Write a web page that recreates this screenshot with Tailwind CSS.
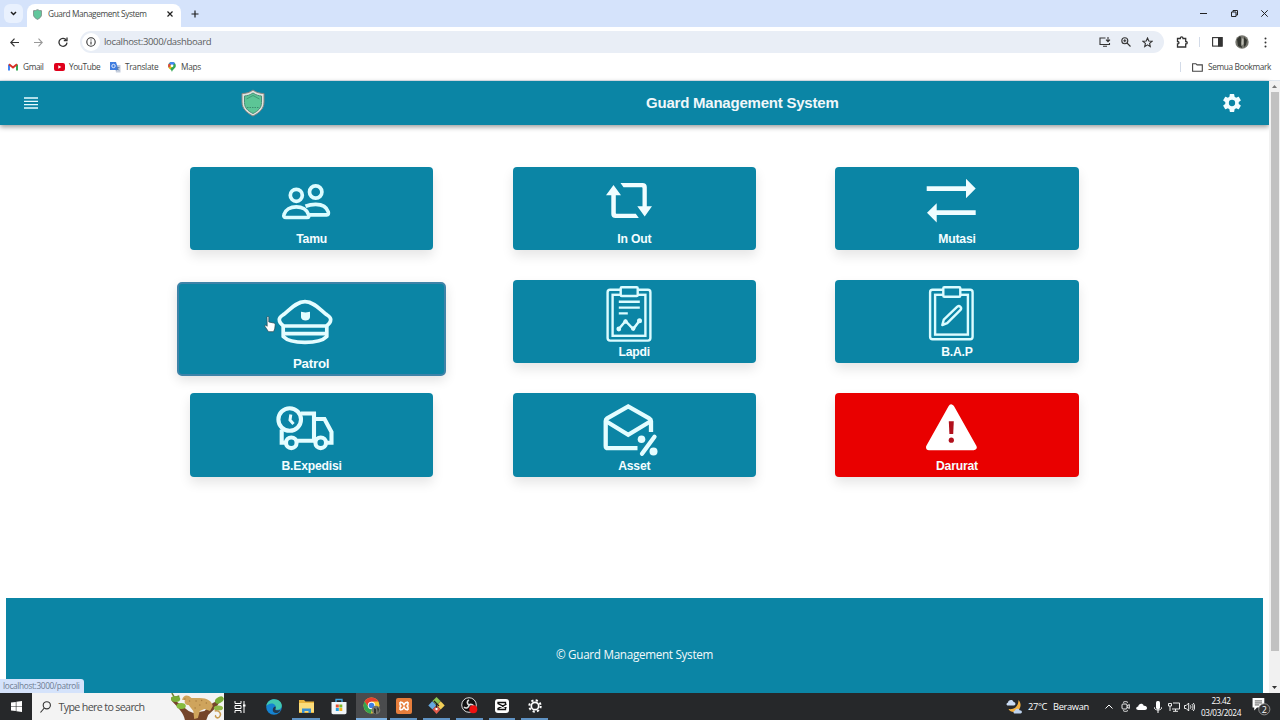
<!DOCTYPE html>
<html lang="id">
  <head>
    <meta charset="UTF-8" />
    <meta name="viewport" content="width=device-width, initial-scale=1.0" />
    <title>Guard Management System</title>
    <script src="https://cdn.jsdelivr.net/npm/@tailwindcss/browser@4"></script>
  </head>

  <body
    class="w-[1280px] h-[720px] overflow-hidden flex flex-col bg-white font-['Open_Sans','Noto_Sans',sans-serif] text-[#444746]"
  >
    <!-- Tab strip -->
    <div class="h-[27px] shrink-0 bg-[#d5e3fb] flex items-center">
      <div class="w-[19px] h-[19px] ml-1 rounded-md bg-[#e9f1fe] flex items-center justify-center">
        <svg class="w-[7px] h-[5px]" viewBox="0 0 7 5" fill="none" stroke="#1f1f1f" stroke-width="1.5"><path d="M1 1l2.500 2.500L6 1" /></svg>
      </div>
      <div class="w-[154px] h-[23px] mt-1 ml-1 rounded-t-lg bg-white flex items-center pl-[6px] pb-[3px]">
        <svg class="w-[9px] h-[11px]" viewBox="0 0 24 28"><path d="M12 1c3 2 7 3 11 3v9c0 7-5 11-11 14C6 24 1 20 1 13V4c4 0 8-1 11-3z" fill="#62c79c" stroke="#7f8f8b" stroke-width="2.500" /></svg>
        <span class="ml-[6px] w-[115px] text-[8.300px] tracking-[-0.400px] whitespace-nowrap">Guard Management System</span>
        <svg class="w-[6px] h-[6px] ml-[4px]" viewBox="0 0 6 6" stroke="#1f1f1f" stroke-width="1.200"><path d="M.5.5l5 5M5.500.5l-5 5" /></svg>
      </div>
      <svg class="w-[8px] h-[8px] ml-[9.500px]" viewBox="0 0 8 8" stroke="#1f1f1f" stroke-width="1.200"><path d="M4 .5v7M.5 4h7" /></svg>
      <div class="ml-auto flex items-center gap-[23.500px] mr-3">
        <svg class="w-[7px] h-[7px]" viewBox="0 0 7 7" stroke="#222"><path d="M0 3.500h7" /></svg>
        <svg class="w-[7px] h-[7px]" viewBox="0 0 7 7" fill="none" stroke="#222"><path d="M.5 2h4.500v4.500H.5zM2 2V.5h4.500V5H5" /></svg>
        <svg class="w-[7px] h-[7px]" viewBox="0 0 7 7" stroke="#222"><path d="M.3.3l6.400 6.400M6.700.3L.3 6.700" /></svg>
      </div>
    </div>

    <!-- Address bar -->
    <div class="h-[30px] shrink-0 flex items-center pl-[10px]">
      <svg class="w-[9px] h-[9px]" viewBox="0 0 9 9" fill="none" stroke="#333" stroke-width="1.200"><path d="M9 4.500H1M4.500.7L.8 4.500l3.700 3.800" /></svg>
      <svg class="w-[9px] h-[9px] ml-[15px]" viewBox="0 0 9 9" fill="none" stroke="#999" stroke-width="1.100"><path d="M0 4.500h8M4.500.7l3.700 3.800-3.700 3.800" /></svg>
      <svg class="w-[10px] h-[10px] ml-[15px]" viewBox="0 0 10 10" fill="none" stroke="#333" stroke-width="1.300"><path d="M8.300 3A4 4 0 1 0 9 5.600" /><path d="M9 .5v3.200H5.800" /></svg>
      <div class="ml-[12px] w-[1084px] h-[22px] rounded-full bg-[#e9eef6] flex items-center pl-[2px] pr-[11px]">
        <div class="w-[18px] h-[18px] rounded-full bg-white flex items-center justify-center">
          <svg class="w-[10px] h-[10px]" viewBox="0 0 10 10" fill="none" stroke="#333" stroke-width="1.100"><circle cx="5" cy="5" r="4.200" /><path d="M5 4.500v3M5 2.500v1.100" /></svg>
        </div>
        <span class="ml-[4px] text-[9.500px] tracking-[-0.340px] text-[#5a5d60]">localhost:3000/dashboard</span>
        <svg class="w-[12px] h-[10px] ml-auto" viewBox="0 0 12 10" fill="none" stroke="#333" stroke-width="1.100"><path d="M6.500 1H1v6.500h9.500V6M4 9.300h4M9 0v4.500M7 2.700l2 2 2-2" /></svg>
        <svg class="w-[10px] h-[10px] ml-[10px]" viewBox="0 0 10 10" fill="none" stroke="#333" stroke-width="1.100"><circle cx="3.800" cy="3.800" r="3" /><path d="M6 6l3.500 3.500M2.300 3.800h3M3.800 2.300v3" /></svg>
        <svg class="w-[11px] h-[11px] ml-[11px]" viewBox="0 0 11 11" fill="none" stroke="#333" stroke-width="1.100"><path d="M5.500 1l1.300 3 3.200.3-2.400 2.100.7 3.200-2.800-1.700-2.800 1.700.7-3.200L1 4.300 4.200 4z" /></svg>
      </div>
      <svg class="w-[12px] h-[12px] ml-[12px]" viewBox="0 0 12 12" fill="none" stroke="#333" stroke-width="1.300"><path d="M1.500 2.500H4.300C4.300.3 7 .3 7 2.500h2.700v3C11.800 5.500 11.800 8 9.700 8v3H1.500V8C3.500 8 3.500 5.500 1.500 5.500z" /></svg>
      <div class="w-px h-[10px] ml-[11px] bg-[#d3dbe8]"></div>
      <svg class="w-[11px] h-[10px] ml-[12px]" viewBox="0 0 11 10"><rect x=".6" y=".6" width="9.500" height="8.500" fill="none" stroke="#333" stroke-width="1.100" /><path d="M6 0h4.500v9.500H6z" fill="#333" /></svg>
      <svg class="w-[14px] h-[14px] ml-[12px]" viewBox="0 0 14 14"><circle cx="7" cy="7" r="6.700" fill="#77776f" /><path d="M2 4l3-3 2 3-1 4 1 5-4-2zM9 2l3 3-1 5-2 2z" fill="#33352f" /><path d="M6.500 3l2 1v5l-2 2z" fill="#bdbdb4" /></svg>
      <svg class="w-[3px] h-[11px] ml-[15px]" viewBox="0 0 3 11" fill="#333"><circle cx="1.500" cy="1.500" r="1" /><circle cx="1.500" cy="5.500" r="1" /><circle cx="1.500" cy="9.500" r="1" /></svg>
    </div>

    <!-- Bookmarks -->
    <div class="h-[24px] shrink-0 flex items-center pl-[8px] pr-[9px] pb-[3px] text-[8.300px] tracking-[-0.400px] border-b border-[#dfe6ee]">
      <svg class="w-[10px] h-[8px]" viewBox="0 0 10 8" fill="none" stroke-width="2"><path d="M1 7.500V1.500" stroke="#4285f4" /><path d="M9 7.500V1.500" stroke="#34a853" /><path d="M1 1.300L5 4.500l4-3.200" stroke="#d93025" /></svg>
      <span class="ml-[5px] w-[31px]">Gmail</span>
      <svg class="w-[11px] h-[8px]" viewBox="0 0 11 8"><rect width="11" height="8" rx="2" fill="#e0001b" /><path d="M4.300 2.300v3.400L7.300 4z" fill="#fff" /></svg>
      <span class="ml-[4px] w-[41px]">YouTube</span>
      <svg class="w-[11px] h-[11px]" viewBox="0 0 11 11"><path d="M4 3h6.500v7.500H6z" fill="#c5cedd" /><path d="M0 0h6l2.500 8H0z" fill="#3f7de0" /><circle cx="3.500" cy="4" r="1.700" fill="none" stroke="#fff" stroke-width=".8" /><path d="M6.500 5.500h3M8 5v1c0 1-1 2-1.500 2.500M7 6.500l2 2" stroke="#5d7fa8" stroke-width=".7" fill="none" /></svg>
      <span class="ml-[4px] w-[43px] tracking-[-0.300px]">Translate</span>
      <svg class="w-[8px] h-[10px]" viewBox="0 0 8 10"><path d="M4 0a3.800 3.800 0 0 0-3.800 3.800C.2 6.500 3.300 7 4 10c.7-3 3.800-3.500 3.800-6.200A3.800 3.800 0 0 0 4 0z" fill="#34a853" /><path d="M4 0a3.800 3.800 0 0 0-3 1.400L4 4l3-2.700A3.800 3.800 0 0 0 4 0z" fill="#4285f4" /><path d="M1 1.400L3 3 .8 6A4 4 0 0 1 1 1.400z" fill="#ea4335" /><path d="M.8 6L3 3.500 4 5 2 7.200z" fill="#fbbc04" /><circle cx="4" cy="3.800" r="1.400" fill="#fff" /></svg>
      <span class="ml-[5px] tracking-[-0.300px]">Maps</span>
      <div class="ml-auto w-px h-[10px] bg-[#d3dbe8]"></div>
      <svg class="w-[11px] h-[9px] ml-[11px]" viewBox="0 0 11 9" fill="none" stroke="#444" stroke-width="1.100"><path d="M.6 8.300V.7h3.300l1.200 1.200h5.200v6.400z" /></svg>
      <span class="ml-[5px]">Semua Bookmark</span>
    </div>

    <!-- Page -->
    <div class="h-[612px] shrink-0 flex relative">
      <div class="w-[1269px] flex flex-col">
        <header class="h-[43.500px] shrink-0 bg-[#0b85a5] shadow-[0_2px_5px_rgba(0,0,0,0.4)] flex items-center pl-[24px] pr-[28px]">
          <svg class="w-[14px] h-[12px]" viewBox="0 0 14 12" stroke="#e8fbff" stroke-width="1.300"><path d="M0 1h14M0 4.300h14M0 7.700h14M0 11h14" /></svg>
          <svg class="w-[24px] h-[28px] ml-[203px]" viewBox="0 0 24 28"><path d="M12 1c3 2.500 7 3.500 11 3.500V13c0 7-5 11-11 14C6 24 1 20 1 13V4.500C5 4.500 9 3.500 12 1z" fill="#dfe3df" stroke="#8a8580" /><path d="M12 4c3 2 5.500 2.800 8.500 3v6.500c0 5.500-3.500 8.500-8.500 11-5-2.500-8.500-5.500-8.500-11V7C6.500 6.800 9 6 12 4z" fill="#5cc596" stroke="#478f78" /><path d="M5.500 10L12 6.500l6.500 3.500" fill="none" stroke="#3f9a77" /><path d="M6 18.500h12" stroke="#3c8f70" stroke-dasharray="1.500 1" /></svg>
          <h1 class="ml-[381px] pt-px font-['Liberation_Sans',sans-serif] font-bold text-[15px] tracking-[-0.220px] text-[#f0f7fa] whitespace-nowrap">Guard Management System</h1>
          <svg class="w-[18px] h-[18px] ml-auto" viewBox="2 2 20 20" fill="#f3fdff"><path d="M19.430 12.980c.04-.32.070-.64.070-.98s-.03-.66-.07-.98l2.110-1.650c.19-.15.240-.42.120-.64l-2-3.460c-.12-.22-.39-.3-.61-.22l-2.490 1c-.52-.4-1.080-.73-1.690-.98l-.38-2.650A.49.490 0 0 0 14 2h-4c-.25 0-.46.180-.49.420l-.38 2.650c-.61.250-1.170.59-1.690.98l-2.490-1c-.23-.09-.49 0-.61.220l-2 3.460c-.13.220-.07.490.120.640l2.110 1.650c-.04.320-.07.650-.07.980s.030.660.070.980l-2.110 1.650c-.19.150-.24.420-.12.640l2 3.460c.12.220.39.300.61.220l2.490-1c.52.400 1.080.730 1.690.98l.38 2.650c.03.240.24.420.49.420h4c.25 0 .46-.18.490-.42l.38-2.650c.61-.25 1.170-.59 1.690-.98l2.490 1c.23.090.49 0 .61-.22l2-3.460c.12-.22.070-.49-.12-.64zM12 15.500a3.500 3.500 0 1 1 0-7 3.500 3.500 0 0 1 0 7z" /></svg>
        </header>

        <main class="mt-[42.100px] ml-[150.300px] w-[968px] h-[431.400px] grid grid-cols-3 auto-rows-[113.350px] justify-items-center items-start font-['Liberation_Sans',sans-serif] font-bold text-[12.200px] tracking-[-0.200px] leading-[14px] text-[#f4fdff]">
          <a class="w-[243.500px] h-[83.500px] pt-[5px] rounded bg-[#0b85a5] shadow-[0_6px_12px_rgba(0,0,0,0.1)] flex flex-col items-center">
            <svg class="w-[60px] h-[60px] mr-[11px]" viewBox="0 0 60 60" fill="none" stroke="#dcfcff" stroke-width="3.700"><circle cx="20.300" cy="23.300" r="6" /><circle cx="39.700" cy="20" r="6.200" /><path d="M10 45.500h21c2 0 2-1.500 1.500-3C31 37.500 26 34.800 20.300 34.800S9.500 37.500 8 42.500c-.5 1.500 0 3 2 3z" /><path d="M29.500 34.300c3-1.300 6-2 10.200-2 6 0 11 2.700 12.500 7.500.6 2 0 3-1.500 3H33.500" /></svg>
            <span>Tamu</span>
          </a>
          <a class="w-[243.500px] h-[83.500px] pt-[5px] rounded bg-[#0b85a5] shadow-[0_6px_12px_rgba(0,0,0,0.1)] flex flex-col items-center">
            <svg class="w-[60px] h-[60px] mr-[11px]" viewBox="0 0 60 60" fill="#f0fdff"><path d="M14.500 13l7.500 10.300h-5.200v17.500c0 .6.300 1 1 1h19l3 4.200H16.500c-2.700 0-4.200-1.500-4.200-4V23.300H7z" /><path d="M21.500 11h22c2.700 0 4.300 1.500 4.300 4v19.300H53l-7.300 10.200-7.400-10.200h5.200V16.300c0-.6-.3-1-1-1H24.500z" /></svg>
            <span>In Out</span>
          </a>
          <a class="w-[243.500px] h-[83.500px] pt-[5px] rounded bg-[#0b85a5] shadow-[0_6px_12px_rgba(0,0,0,0.1)] flex flex-col items-center">
            <svg class="w-[60px] h-[60px] mr-[12px]" viewBox="0 0 60 60" fill="#f0fdff"><path d="M5.700 14.300H45V6.700l9.700 9.800-9.700 9.800v-7.400H5.700z" /><path d="M54.700 38.300h-39v-7L6 40.800l9.700 9.700v-7.500h39z" /></svg>
            <span>Mutasi</span>
          </a>

          <!-- hovered card grows past its cell -->
          <a class="w-[269px] h-[94px] mt-[2.300px] pt-[6px] rounded-[5px] border-2 border-[#3f83a8] bg-[#0b85a5] shadow-[0_4px_12px_rgba(0,0,0,0.12)] flex flex-col items-center text-[13.300px] relative">
            <svg class="w-[60px] h-[60px] mr-[12px]" viewBox="0 0 60 60" fill="none" stroke="#e4fdff" stroke-width="3.700" stroke-linejoin="round"><path d="M7.800 36c-2.800-1.800-4.500-4-4.500-6.500 0-3 3-4 5-5.500 5-3.700 11.700-12.300 20.700-12.300S44.700 20.300 49.700 24c2 1.500 5 2.500 5 5.500 0 2.500-1.700 4.700-4.500 6.500z" /><path d="M7.200 36v10.500C11 50.500 20 52.300 29 52.300s18-1.800 21.800-5.800V36M7.500 43.700h43" /><path d="M25 21.700l4.500.8 4.500-.8v5.500c0 2-2.500 3.300-4.500 3.300S25 29.200 25 27.200z" fill="#e4fdff" stroke="none" /></svg>
            <span class="mt-[6.500px] mr-px">Patrol</span>
            <svg class="absolute left-[85px] top-[32px] w-[12px] h-[17px]" viewBox="0 0 12 17"><path d="M3 1.200c0-1 1.800-1 1.800 0V6l5 1c1 .3 1.500 1 1.400 2l-.5 4-1.200 2.700H4.500L1 10.500c-.6-1 .5-1.800 1.300-1l.9.800z" fill="#fff" stroke="#26454f" stroke-width=".7" /></svg>
          </a>
          <a class="w-[243.500px] h-[83.500px] pt-[5px] rounded bg-[#0b85a5] shadow-[0_6px_12px_rgba(0,0,0,0.1)] flex flex-col items-center">
            <svg class="w-[60px] h-[60px] mr-[11px]" viewBox="0 0 60 60" fill="none" stroke="#dcfcff" stroke-width="2.400"><rect x="8.600" y="4.800" width="42.800" height="50.800" rx="2.500" /><rect x="13.600" y="9.800" width="32.800" height="41" /><rect x="21.700" y="2.200" width="17" height="8.800" rx="1" fill="#0b85a5" /><path d="M19.800 16.700h21M19.800 22.600h21M19.800 28.400h9" /><path d="M19.800 44l6.700-8 7.700 8 6.300-8.300" stroke-width="2.500" /><g fill="#dcfcff" stroke="none"><circle cx="19.800" cy="44" r="2.400" /><circle cx="26.500" cy="36.500" r="2.200" /><circle cx="34.200" cy="43.500" r="2.200" /><circle cx="40.500" cy="35.700" r="2.500" /></g></svg>
            <span>Lapdi</span>
          </a>
          <a class="w-[243.500px] h-[83.500px] pt-[5px] rounded bg-[#0b85a5] shadow-[0_6px_12px_rgba(0,0,0,0.1)] flex flex-col items-center">
            <svg class="w-[60px] h-[60px] mr-[12px]" viewBox="0 0 60 60" fill="none" stroke="#dcfcff" stroke-width="2.400"><rect x="9.100" y="4.800" width="42.500" height="49.500" rx="2.500" /><rect x="14.100" y="9.800" width="32.800" height="39.800" /><rect x="22.300" y="2.200" width="17" height="9.500" rx="1" fill="#0b85a5" /><path d="M21.300 40l1.500-5.300 13.500-13c2.200-1.700 5 1 3.200 3.200l-13.300 13.300z" stroke-linejoin="round" /></svg>
            <span>B.A.P</span>
          </a>

          <a class="w-[243.500px] h-[83.500px] pt-[6px] rounded bg-[#0b85a5] shadow-[0_6px_12px_rgba(0,0,0,0.1)] flex flex-col items-center">
            <svg class="w-[60px] h-[60px] mr-[11px]" viewBox="0 0 60 60" fill="none" stroke="#e4fdff" stroke-width="4.100"><circle cx="13.700" cy="20.500" r="11.300" /><path d="M14.800 15.500L14 21l3.500 4" stroke-width="3" /><path d="M25 14.500h13v27M38 20h10.500l7 13v10.700h-5M5.700 30.500v13.200H10M21 41.700h18" /><circle cx="15.300" cy="43.800" r="5.300" /><circle cx="44.700" cy="43.800" r="5.300" /></svg>
            <span>B.Expedisi</span>
          </a>
          <a class="w-[243.500px] h-[83.500px] pt-[6px] rounded bg-[#0b85a5] shadow-[0_6px_12px_rgba(0,0,0,0.1)] flex flex-col items-center">
            <svg class="w-[60px] h-[60px] mr-[12px]" viewBox="0 0 60 60" fill="none" stroke="#e4fdff" stroke-width="4.300"><path d="M39.500 49.200H10c-1.500 0-2.300-.8-2.300-2.300V22c0-1.500.5-2 1.500-2.700L30.200 7.500l21 11.800c1.200.7 1.800 1.200 1.800 2.700v11" /><path d="M8.500 22.500l21.700 13.300 22-13.300" /><path d="M56.500 37.800L44 54.800" stroke-linecap="round" /><g fill="#e4fdff" stroke="none"><circle cx="43.500" cy="40.200" r="3.800" /><circle cx="55.500" cy="52.500" r="4" /></g></svg>
            <span>Asset</span>
          </a>
          <a class="w-[243.500px] h-[83.500px] pt-[6px] rounded bg-[#e90000] shadow-[0_6px_12px_rgba(0,0,0,0.1)] flex flex-col items-center">
            <svg class="w-[60px] h-[60px] mr-[12px]" viewBox="0 0 60 60"><path d="M30.300 8.500L52.700 48.200H8z" fill="#fff" stroke="#fff" stroke-width="6" stroke-linejoin="round" /><path d="M27.800 22.200h5l-.6 12.800h-3.800z" fill="#b1101c" /><circle cx="30.300" cy="41.200" r="2.600" fill="#b1101c" /></svg>
            <span>Darurat</span>
          </a>
        </main>

        <footer class="mx-[6px] flex-1 bg-[#0b85a5] flex justify-center pt-[47px] text-[11.700px] tracking-[-0.300px] leading-[18px] text-[#f2f9fb]">
          © Guard Management System
        </footer>
      </div>

      <!-- Scrollbar -->
      <div class="w-[11px] bg-[#f1f1f1] flex flex-col items-center">
        <svg class="w-[5px] h-[3px] mt-[4px]" viewBox="0 0 5 3" fill="#777"><path d="M0 3L2.500 0 5 3z" /></svg>
        <div class="w-[8px] h-[559px] mt-[4px] bg-[#c1c1c1]"></div>
        <svg class="w-[5px] h-[3px] mt-auto mb-[4px]" viewBox="0 0 5 3" fill="#333"><path d="M0 0h5L2.500 3z" /></svg>
      </div>

      <div class="absolute left-0 bottom-0 w-[84px] h-[14px] bg-[#d5e3fb] rounded-tr-[3px] pl-[3px] text-[8.300px] tracking-[-0.350px] leading-[14px] text-[#6f7d92]">localhost:3000/patroli</div>
    </div>

    <!-- Taskbar -->
    <div class="flex-1 bg-[#26282a] flex items-stretch text-white">
      <div class="w-[32px] flex items-center justify-center">
        <svg class="w-[11px] h-[11px]" viewBox="0 0 11 11" fill="#fff"><path d="M0 1.600l4.800-.7v4.300H0zM5.400.8L11 0v5.200H5.400zM0 5.800h4.800v4.300L0 9.400zM5.400 5.800H11V11l-5.600-.8z" /></svg>
      </div>
      <div class="w-[192px] bg-[#f3f3f3] flex items-center pl-[8px] text-[#4c4c4c] text-[10.700px] relative">
        <svg class="w-[11px] h-[12px]" viewBox="0 0 11 12" fill="none" stroke="#333" stroke-width="1.100"><circle cx="6.800" cy="4.300" r="3.600" /><path d="M4.300 7L.5 11.500" /></svg>
        <span class="ml-[7.500px] mt-px tracking-[-0.650px]">Type here to search</span>
        <svg class="absolute right-0 bottom-0 w-[54px] h-[27px]" viewBox="0 0 58 27" preserveAspectRatio="none">
          <path d="M1 4l8 6 11 8 5 2 12-2 9-8 9-4-5 8-9 8-2 5H16C15 20 8 14 2 8z" fill="#75452a" />
          <path d="M2 0l5 8M3 5L10 3" stroke="#6a7d32" stroke-width="1.500" />
          <ellipse cx="6" cy="6" rx="5" ry="3" fill="#79ae37" /><ellipse cx="12" cy="13" rx="5" ry="3" fill="#86bc3e" /><ellipse cx="53" cy="7" rx="5" ry="3" fill="#79ae37" transform="rotate(-25 53 7)" /><ellipse cx="52" cy="15" rx="5" ry="2.500" fill="#91b947" />
          <path d="M13 7c1-5 6-6 10-2l9 0c8 0 13 3 14 8l-3 5-6-2-5 2-2 7-4 1-1-8-5-6c-3 0-5-2-4-5z" fill="#cfa45c" />
          <path d="M48 18c5-1 8 3 5 6-2 2-5 0-4-2" fill="none" stroke="#c99c52" stroke-width="1.500" />
          <g fill="#a67b3d"><circle cx="16" cy="6" r=".8" /><circle cx="21" cy="8" r=".8" /><circle cx="28" cy="8" r=".8" /><circle cx="34" cy="7.500" r=".8" /><circle cx="39" cy="10" r=".8" /><circle cx="32" cy="12" r=".8" /><circle cx="27" cy="15" r=".8" /></g>
        </svg>
      </div>
      <div class="w-[32px] flex items-center justify-center">
        <svg class="w-[12px] h-[12px]" viewBox="0 0 12 12" fill="none" stroke="#fff"><path d="M1 0v2.500h6V0M1 12V9.500h6V12M1 4.500h6v3H1zM10 0v12" /><path d="M9 3.500h2.500v2H9z" fill="#fff" stroke="none" /></svg>
      </div>
      <div class="w-[36px] flex items-center justify-center">
        <svg class="w-[16px] h-[16px]" viewBox="0 0 16 16"><circle cx="8" cy="8" r="7.800" fill="#1583d1" /><path d="M.3 7C1 2.500 4.500.2 8.300.2c4.300 0 7.500 3 7.500 6.300 0 3-2.500 4.300-5 4.300-1.500 0-2-.6-1.300-1.300C10.500 7 8.500 4.500 5.800 4.500 3 4.500 1 6 .3 7z" fill="#42c8b0" /><path d="M9.300 10c-.5 1 2 2 5.500.7-2 3.500-5.500 4.300-7.300 2.300C6 11 7 8 9.300 7.500c.7.800.5 1.700 0 2.500z" fill="#24384b" /></svg>
      </div>
      <div class="w-[28px] mr-[3px] flex items-center justify-center border-b-2 border-[#5f93c4] pt-[2px]">
        <svg class="w-[15px] h-[13px]" viewBox="0 0 15 13"><path d="M0 0h5l1.500 1.500H15V13H0z" fill="#e9b43d" /><path d="M0 3h15v9H0z" fill="#fbdc7a" /><path d="M3 13V8.500h9V13H9.500v-2h-4v2z" fill="#3b8fd0" /></svg>
      </div>
      <div class="w-[32px] mr-px flex items-center justify-center">
        <svg class="w-[16px] h-[17px]" viewBox="0 0 16 17"><path d="M5 4V1.500h6V4" fill="none" stroke="#3fa8e8" stroke-width="1.300" /><path d="M.5 4h15v10.500c0 1-.6 1.700-1.600 1.700H2.100c-1 0-1.600-.7-1.600-1.700z" fill="#f1f5f8" /><path d="M4.800 6.500h3v3h-3z" fill="#e8512e" /><path d="M8.300 6.500h3v3h-3z" fill="#7bb928" /><path d="M4.800 10h3v3h-3z" fill="#259fe0" /><path d="M8.300 10h3v3h-3z" fill="#f5b51e" /></svg>
      </div>
      <div class="w-[31px] mr-[3px] bg-[#4a4b4d] flex items-center justify-center border-b-2 border-[#7cb1e2]">
        <svg class="w-[18px] h-[18px]" viewBox="0 0 18 18"><circle cx="8.500" cy="8.500" r="8" fill="#f8c934" /><path d="M1.600 4.500a8 8 0 0 1 13.800 0H8.500L5 9.500z" fill="#e5402f" /><path d="M1.600 4.500L6 11l3 1-1 4.500A8 8 0 0 1 1.600 4.500z" fill="#35a351" /><circle cx="8.500" cy="8.500" r="3.700" fill="#fff" /><circle cx="8.500" cy="8.500" r="2.800" fill="#3f7fe6" /><circle cx="13" cy="13" r="4.300" fill="#74736b" /><path d="M11 11l2 1v5l-2-1zM14 10l2 2-1 4z" fill="#2f312c" /></svg>
      </div>
      <div class="w-[27px] flex items-center justify-center border-b-2 border-[#5f93c4]">
        <svg class="w-[16px] h-[16px]" viewBox="0 0 16 16"><rect width="16" height="16" rx="2" fill="#e67e3c" /><path d="M4 4l2.500.7L8 7l1.500-2.300L12 4M4 12l2.500-.7L8 9l1.500 2.300L12 12M4 4v3l1 1-1 1v3M12 4v3l-1 1 1 1v3" fill="none" stroke="#fff" stroke-width="1.500" /></svg>
      </div>
      <div class="w-[27px] ml-[6px] flex items-center justify-center border-b-2 border-[#5f93c4]">
        <svg class="w-[17px] h-[17px]" viewBox="0 0 17 17"><path d="M8.500 0l4 4-4 4.500-4-4.500z" fill="#8cc653" /><path d="M4.300 4.300l4.200 4.200-4 4L.3 8.500z" fill="#66a9df" /><path d="M12.700 4.300l4 4.200-4 4-4.200-4z" fill="#f1cf57" /><path d="M8.500 8.500l4 4-4 4.500-4-4.500z" fill="#e05a4b" /><path d="M6 4l5 5M8.500 6v7" stroke="#222" stroke-width="1.300" /><circle cx="8.500" cy="12" r="1.200" fill="#fff" /></svg>
      </div>
      <div class="w-[27px] ml-[6px] flex items-center justify-center border-b-2 border-[#5f93c4]">
        <svg class="w-[17px] h-[17px]" viewBox="0 0 17 17"><circle cx="8" cy="8" r="7.300" fill="#111" stroke="#ddd" /><path d="M8 8c-2-1-2.500-4 0-5M8 8c2-1.500 5 0 5 2M8 8c0 2.500-3 4-5 2" fill="none" stroke="#ddd" stroke-width="1.600" /><circle cx="12.300" cy="12.300" r="4" fill="#ee1111" /></svg>
      </div>
      <div class="w-[26px] ml-[6px] flex items-center justify-center border-b-2 border-[#5f93c4]">
        <svg class="w-[14px] h-[14px]" viewBox="0 0 14 14"><rect width="14" height="14" rx="3" fill="#fff" /><path d="M11.500 5.200L3 9.500v1h7.500V9M11.500 8.800L3 4.500v-1h7.500V5" fill="none" stroke="#111" stroke-width="1.300" /></svg>
      </div>
      <div class="w-[27px] ml-[6px] flex items-center justify-center border-b-2 border-[#5f93c4]">
        <svg class="w-[14px] h-[14px]" viewBox="0 0 14 14" fill="none" stroke="#fff"><circle cx="7" cy="7" r="3.700" stroke-width="1.700" /><circle cx="7" cy="7" r="5.700" stroke-width="2" stroke-dasharray="2.200 2.277" /></svg>
      </div>

      <div class="ml-auto flex items-center">
        <svg class="w-[17px] h-[15px]" viewBox="0 0 17 15"><path d="M12.500 1c4 4 2 11-3.500 12-3 .5-5.500-1-6.500-3 6 1 10-3 10-9z" fill="#f2b040" /><path d="M2 6.500C0 6.500 0 3.700 2 3.700 2 .5 7 0 7.500 3 10 3 10 6.500 8 6.500z" fill="#cbdcf3" /><path d="M9 14.500c-2 0-2-2.700 0-2.700.5-2.500 4-2.500 4.500-.5 3-.3 3 3.200 1 3.200z" fill="#bfd3ee" /></svg>
        <span class="ml-[5px] text-[9.300px] w-[25px] tracking-[-0.350px]">27°C</span>
        <span class="text-[9.300px] w-[50px] tracking-[-0.350px]">Berawan</span>
        <svg class="w-[8px] h-[5px] ml-[2px]" viewBox="0 0 8 5" fill="none" stroke="#fff"><path d="M.5 4.500L4 1l3.500 3.500" /></svg>
        <svg class="w-[9px] h-[11px] ml-[8px]" viewBox="0 0 9 11" fill="none" stroke="#fff" stroke-width=".9"><path d="M2 1.500C3.500.3 5.500.3 7 1.500M2 9.500c1.500 1.200 3.500 1.200 5 0" /><rect x="1" y="3" width="5" height="5" rx="1" /><path d="M6 5l2.300-1.500v4L6 6" /></svg>
        <svg class="w-[11px] h-[7px] ml-[6px]" viewBox="0 0 11 7" fill="#fff"><path d="M2.300 7C-.5 7-.5 3.600 2.200 3.400 2.700 0 7 0 7.700 2.700 10 2.500 11 3.500 11 5c0 1.200-.8 2-2 2z" /></svg>
        <svg class="w-[8px] h-[12px] ml-[7px]" viewBox="0 0 8 12" fill="#fff"><rect x="2" width="4" height="8" rx="1.500" /><path d="M0 6c0 4 8 4 8 0M4 8v4" fill="none" stroke="#fff" /></svg>
        <svg class="w-[12px] h-[10px] ml-[6px]" viewBox="0 0 12 10" fill="none" stroke="#fff" stroke-width=".9"><path d="M5 1h6.500v6H4M5 9.300h5M7.500 7v2M.5 1.500h3v2.500h-3zM2 4v5" /></svg>
        <svg class="w-[11px] h-[10px] ml-[4px]" viewBox="0 0 11 10" fill="none" stroke="#fff" stroke-width=".9"><path d="M.5 3.500h1.700L4.700 1v8L2.200 6.500H.5zM6.300 3.300c.8 1 .8 2.400 0 3.400M7.900 2c1.500 1.700 1.500 4.300 0 6M9.300 1c1.800 2.200 1.800 5.800 0 8" /></svg>
        <div class="w-[40px] ml-[6px] text-center text-[8.200px] leading-[12px] tracking-[-0.350px]"><div>23.42</div><div class="whitespace-nowrap">03/03/2024</div></div>
        <svg class="w-[19px] h-[19px] ml-[11px] mr-[9px]" viewBox="0 0 17 17"><path d="M.5 1H11v8.500H4.500L2 12V9.500H.5z" fill="#fff" /><path d="M2.500 3.500h6.500M2.500 5.300h6.500M2.500 7.100h4" stroke="#444" stroke-width=".8" /><circle cx="11" cy="11" r="5" fill="#333" stroke="#999" stroke-width=".8" /><text x="11" y="14" text-anchor="middle" font-size="8" fill="#fff">2</text></svg>
      </div>
    </div>
  </body>
</html>
